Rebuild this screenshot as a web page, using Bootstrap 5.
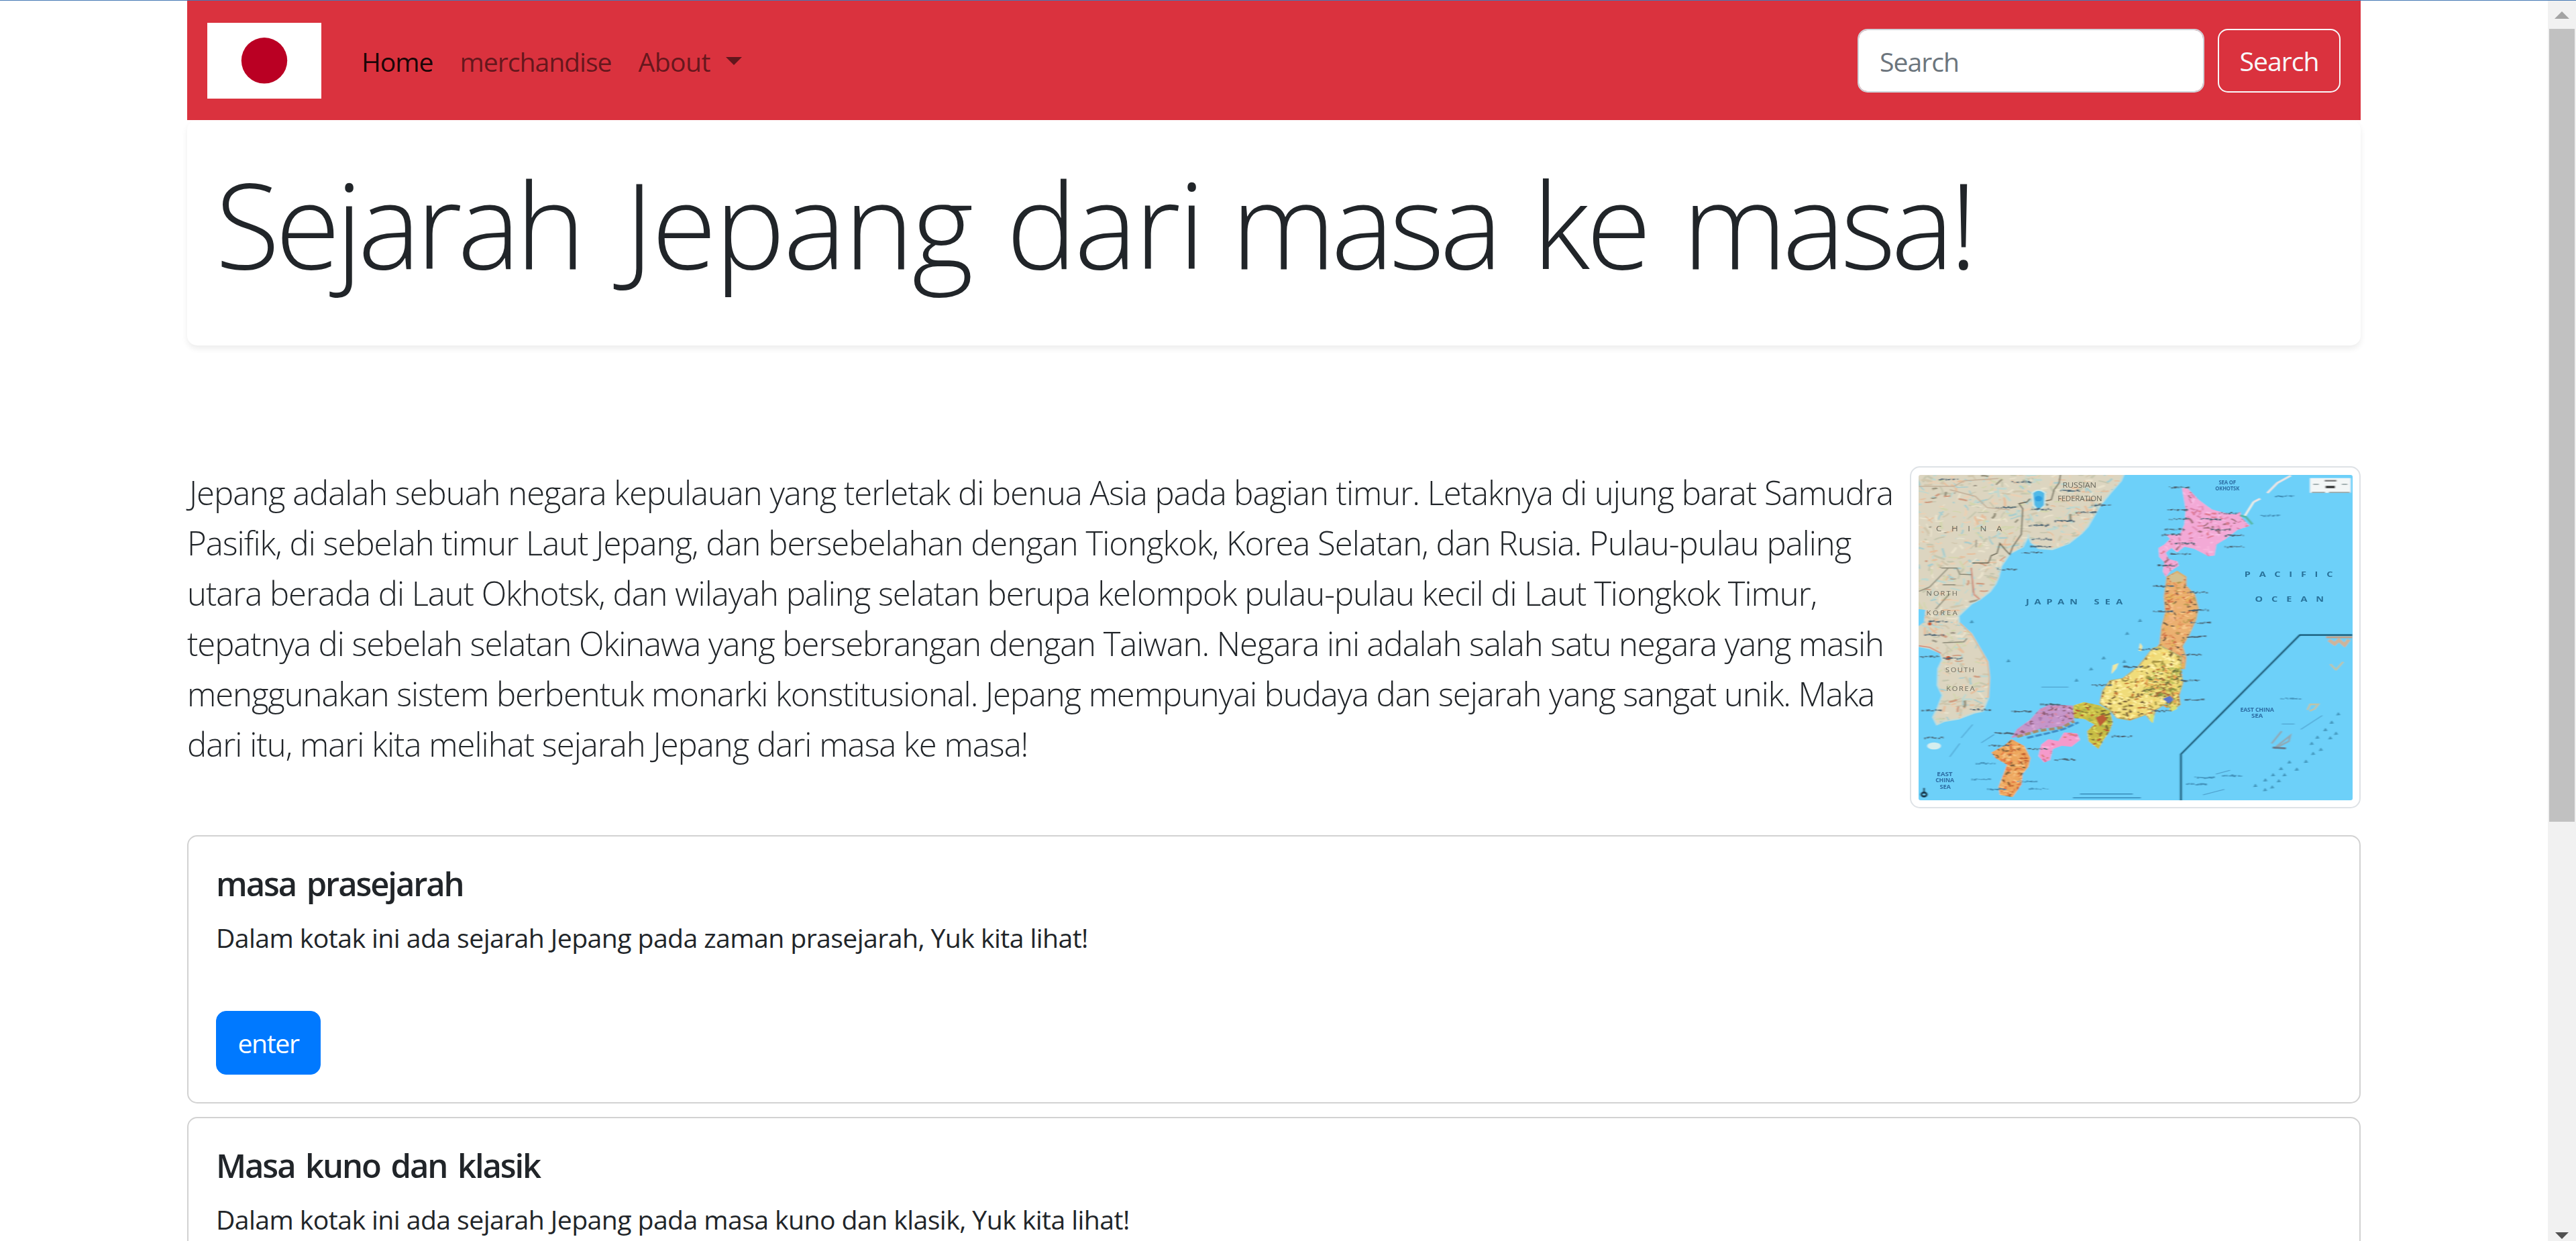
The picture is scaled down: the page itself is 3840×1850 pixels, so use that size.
<!DOCTYPE html>
<html lang="id">
<head>
<meta charset="utf-8">
<meta name="viewport" content="width=device-width, initial-scale=1">
<title>Sejarah Jepang</title>
<link href="https://cdn.jsdelivr.net/npm/bootstrap@5.3.0/dist/css/bootstrap.min.css" rel="stylesheet">
<style>
  html { font-size: 40px; overflow: hidden; }
  body { font-family: "Open Sans", "Noto Sans", sans-serif; height: 1850px; overflow: hidden; border-top: 1px solid #4679b4; color: #212529; background: #fff; letter-spacing: -.58px; font-size: 39.2px; line-height: 60px; }
  .page-shell { height: 1849px; }
  .page-main { width: 3798px; overflow: hidden; }
  .site-width { width: 3240px; max-width: 3240px; }
  .site-nav { background: #da323e; height: 178px; }
  .site-nav .container-fluid { padding: 0 30px; }
  .flag-logo { width: 170px; height: 113px; }
  .site-nav .nav-link { font-size: 39.2px; letter-spacing: -1.05px; color: rgba(0,0,0,.55); padding-top: 22px; padding-bottom: 18px; }
  .site-nav .nav-link.active { color: rgba(0,0,0,.9); }
  .site-nav .dropdown-toggle { letter-spacing: -.6px; }
  .site-nav .dropdown-toggle::after { border-top-width: 12px; border-left-width: 12px; border-right-width: 12px; margin-left: 23px; vertical-align: 10px; }
  .site-search .form-control { width: 517px; height: 95px; border: 2px solid #ced4da; font-size: 39.2px; letter-spacing: -1px; padding: 17px 31px 15px; color: #6c757d; }
  .site-search .form-control::placeholder { color: #6c757d; opacity: 1; }
  .site-search .btn { width: 183px; height: 95px; border: 2px solid #f8f9fa; font-size: 39.2px; letter-spacing: -1px; padding: 16px 0 14px; line-height: 60px; white-space: nowrap; }
  .hero-box { height: 336px; border-radius: 15px; box-shadow: 0 5px 10px rgba(0,0,0,.075); margin-bottom: 180px; }
  .hero-box h1 { font-size: 176.4px; line-height: 216px; font-weight: 300; letter-spacing: -5.2px; word-spacing: 11px; white-space: nowrap; margin-left: 2px; padding-top: 6px; }
  .hero-box .w-tight { letter-spacing: -6.8px; }
  .hero-box .w-jepang { letter-spacing: -2.8px; margin-left: 13px; }
  .hero-box .w-dari { letter-spacing: -3.6px; margin-right: -9px; }
  .intro-text { font-size: 49px; line-height: 75px; font-weight: 300; letter-spacing: -1.02px; padding-top: 2px; }
  .intro-text span { display: block; white-space: nowrap; }
  .intro-text span:nth-child(1) { text-indent: 3px; letter-spacing: -1.01px; }
  .intro-text span:nth-child(2), .intro-text span:nth-child(6) { letter-spacing: -.97px; }
  .intro-text span:nth-child(4) { letter-spacing: -1.04px; }
  .intro-text span:nth-child(5) { letter-spacing: -1.07px; }
  .map-thumb { width: 672px; height: 510px; padding: 10.5px; border: 2px solid #dee2e6; border-radius: 15px; }
  .map-thumb svg { border-radius: 3px; }
  .era-card { height: 400px; border: 2px solid #d2d2d2; border-radius: 15px; margin-bottom: 20px; }
  .era-card .card-body { padding: 40px 41px; }
  .era-card .card-title { font-size: 49px; line-height: 60px; font-weight: 600; letter-spacing: -2.1px; word-spacing: 5px; margin-bottom: 20px; }
  .era-card .card-text { margin-bottom: 80px; padding-top: 1px; height: 60px; }
  .era-card .btn { background: #0079ff; border-color: #0079ff; width: 156px; height: 95px; border-radius: 15px; font-size: 39.2px; line-height: 60px; padding: 17px 0; letter-spacing: -1.4px; }
  .scroll-rail { width: 42px; background: #f1f1f1; }
  .scroll-rail .thumb { width: 38px; height: 1182px; background: #c1c1c1; }
  .scroll-end { height: 42px; }
</style>
<script src="https://cdn.jsdelivr.net/npm/bootstrap@5.3.0/dist/js/bootstrap.bundle.min.js"></script>
</head>
<body>
<div class="page-shell d-flex">
  <main class="page-main">
    <div class="site-width mx-auto">
      <nav class="site-nav navbar navbar-expand-lg p-0">
        <div class="container-fluid">
          <a class="navbar-brand p-0" href="#">
            <svg class="flag-logo d-block" viewBox="0 0 170 113"><rect width="170" height="113" fill="#fff"/><circle cx="85" cy="56.3" r="34.2" fill="#ba0023"/></svg>
          </a>
          <ul class="navbar-nav me-auto">
            <li class="nav-item"><a class="nav-link active" href="#">Home</a></li>
            <li class="nav-item"><a class="nav-link" href="#">merchandise</a></li>
            <li class="nav-item dropdown"><a class="nav-link dropdown-toggle" href="#">About</a></li>
          </ul>
          <form class="site-search d-flex">
            <input class="form-control me-2" type="search" placeholder="Search">
            <button class="btn btn-outline-light" type="button">Search</button>
          </form>
        </div>
      </nav>

      <header class="hero-box p-3"><h1><span class="w-tight">Sejarah</span> <span class="w-jepang">Jepang</span> <span class="w-dari">dari</span> <span class="w-tight">masa</span> ke <span class="w-tight">masa!</span></h1></header>

      <section class="d-flex justify-content-between mb-3">
        <p class="intro-text mb-0"><span>Jepang adalah sebuah negara kepulauan yang terletak di benua Asia pada bagian timur. Letaknya di ujung barat Samudra</span><span>Pasifik, di sebelah timur Laut Jepang, dan bersebelahan dengan Tiongkok, Korea Selatan, dan Rusia. Pulau-pulau paling</span><span>utara berada di Laut Okhotsk, dan wilayah paling selatan berupa kelompok pulau-pulau kecil di Laut Tiongkok Timur,</span><span>tepatnya di sebelah selatan Okinawa yang bersebrangan dengan Taiwan. Negara ini adalah salah satu negara yang masih</span><span>menggunakan sistem berbentuk monarki konstitusional. Jepang mempunyai budaya dan sejarah yang sangat unik. Maka</span><span>dari itu, mari kita melihat sejarah Jepang dari masa ke masa!</span></p>
        <div class="map-thumb flex-shrink-0">
          <svg id="map" class="d-block w-100 h-100" viewBox="21 24 1517 1455" preserveAspectRatio="none" font-family="Open Sans, sans-serif">
            <defs>
              <filter id="soft" x="0" y="0" width="100%" height="100%"><feGaussianBlur stdDeviation="2.2"/></filter>
              <clipPath id="c-main"><path id="p-main" d="M0 0H745L728 50 690 105 655 160 612 255 590 285 545 330 488 357 440 352 415 325 405 295 385 345 340 375 310 430 300 480 290 510 270 545 235 580 205 600 160 655 162 685 205 735 235 800 262 860 268 930 264 1020 245 1080 215 1088 190 1100 160 1115 110 1125 85 1140 72 1108 90 1060 105 1010 88 965 90 890 105 850 98 820 60 800 0 785V620H0z"/></clipPath>
              <clipPath id="c-hok"><path id="p-hok" d="M942 82 962 85 1000 135 1045 178 1095 195 1130 200 1145 190 1150 215 1178 252 1135 270 1095 310 1062 335 1055 385 1035 388 985 355 950 345 925 370 905 350 885 372 895 400 925 410 930 430 900 455 885 480 875 455 880 415 862 390 860 350 880 335 900 310 885 290 935 290 950 245 955 180z"/></clipPath>
              <clipPath id="c-toh"><path id="p-toh" d="M890 480 925 455 955 480 955 520 985 560 998 620 990 670 965 740 942 790 955 840 950 890 850 880 835 830 865 780 872 700 885 640 880 570z"/></clipPath>
              <clipPath id="c-chu"><path id="p-chu" d="M840 800 870 790 940 840 935 900 945 950 930 1010 935 1050 905 1078 890 1040 850 1075 835 1125 815 1095 760 1120 715 1110 690 1075 655 1045 665 990 690 945 735 935 790 880z"/></clipPath>
              <clipPath id="c-kan"><path id="p-kan" d="M860 870 940 870 945 950 930 1010 935 1050 895 1075 850 1030 805 990 820 930z"/></clipPath>
              <clipPath id="c-kin"><path id="p-kin" d="M562 1055 600 1040 655 1055 690 1080 700 1130 690 1170 670 1205 650 1250 615 1215 610 1170 635 1140 600 1115 560 1110z"/></clipPath>
              <clipPath id="c-cgk"><path id="p-cgk" d="M345 1200 365 1160 410 1120 445 1070 480 1050 560 1055 565 1120 520 1150 440 1160 390 1190z"/></clipPath>
              <clipPath id="c-shi"><path id="p-shi" d="M450 1230 475 1205 510 1215 530 1175 575 1180 585 1210 555 1240 520 1235 490 1250 480 1300 460 1310 440 1280z"/></clipPath>
              <clipPath id="c-kyu"><path id="p-kyu" d="M275 1265 320 1235 345 1205 390 1235 412 1290 405 1330 385 1360 380 1410 350 1465 305 1455 300 1420 315 1370 330 1320 290 1290z"/></clipPath>
            </defs>
            <g filter="url(#soft)">
              <rect width="1560" height="1500" fill="#6dd0f9"/>
              <use href="#p-main" fill="#dcd5c0" stroke="#c3dcd8" stroke-width="7"/>
              <g id="s-main" clip-path="url(#c-main)"></g>
              <path d="M418 105Q440 80 464 105L462 160 440 185 423 160z" fill="#4fb9e8" stroke="#cfe9e6" stroke-width="6"/>
              <path d="M0 620 45 628 40 680 22 700H0z" fill="#6dd0f9"/>
              <use href="#p-hok" fill="#f3a9d6"/><g id="s-hok" clip-path="url(#c-hok)"></g>
              <use href="#p-toh" fill="#ebb070" stroke="#c9b07c" stroke-width="6"/><g id="s-toh" clip-path="url(#c-toh)"></g>
              <use href="#p-chu" fill="#f0dc7a" stroke="#b9b67a" stroke-width="6"/><g id="s-chu" clip-path="url(#c-chu)"></g>
              <g id="s-kan" clip-path="url(#c-kan)"></g>
              <use href="#p-kin" fill="#c8bd45"/><g id="s-kin" clip-path="url(#c-kin)"></g>
              <use href="#p-cgk" fill="#c595c9"/><g id="s-cgk" clip-path="url(#c-cgk)"></g>
              <path d="M365 1195 440 1168 520 1155 565 1125" stroke="#a58d6a" stroke-width="12" fill="none" stroke-dasharray="22 7"/>
              <path d="M400 1200 470 1180 530 1160 580 1130" stroke="#3f8ec6" stroke-width="9" fill="none" stroke-dasharray="24 6"/>
              <use href="#p-shi" fill="#f59acb"/><g id="s-shi" clip-path="url(#c-shi)"></g>
              <use href="#p-kyu" fill="#eda65c"/><g id="s-kyu" clip-path="url(#c-kyu)"></g>
              <path d="M875 1025 900 1012 912 1030 895 1046z" fill="#5b76c8"/><path d="M640 1110 665 1095 680 1115 655 1150z" fill="#bd5e35"/>
              <path d="M895 1075 920 1052 925 1070 905 1082zM830 1090 845 1100 840 1135 828 1120z" fill="#d9e070"/>
              <path d="M695 915 700 875 720 865 712 890zM790 810 795 775 803 790 800 812z" fill="#efe8a0"/>
              <path d="M895 478 925 462 950 482 945 500 905 505z" fill="#d3c090"/>
              <path d="M1160 210 1192 145" stroke="#f2f0e4" stroke-width="7"/><path d="M1192 145 1215 130M1240 105 1275 60 1322 27" stroke="#efe6e2" stroke-width="8" fill="none"/>
              <path d="M1145 205 1165 212 1188 245" stroke="#59b9a8" stroke-width="9" fill="none"/>
              <ellipse cx="75" cy="1236" rx="24" ry="16" fill="#d5eeee"/>
              <ellipse cx="440" cy="130" rx="13" ry="12" fill="#2d9fe0"/>
              <g fill="none" stroke="#6b6857" stroke-width="4.5">
                <path d="M517 24 512 60 495 90 485 135 465 140M410 130 400 145 372 152 385 175 380 290 350 345 340 380 325 360 305 330 295 375 275 385 265 418 208 418"/>
                <path d="M22 545 60 525 125 440 155 440 165 468 208 470M205 440 212 550M105 775 180 770 190 755M155 440 100 440M105 515 150 515M80 625 130 555" stroke="#8b8977"/>
                <path d="M21 75 145 75 180 50 300 40M130 90 220 120 260 170 340 180" stroke="#c4b19a"/>
              </g>
              <path d="M21 788 60 795 100 822M205 440 215 560 235 580" stroke="#d88f7d" stroke-width="5" fill="none"/>
              <path d="M165 685 205 735 235 800 262 860 268 930 264 1020" stroke="#e6b482" stroke-width="4" fill="none"/>
              <g fill="#cf5a30"><circle cx="125" cy="843" r="9"/><circle cx="60" cy="690" r="7"/></g>
              <g stroke="#4a99c5" stroke-width="3"><path d="M210 1140 170 1200M165 1225 130 1285M285 1185 240 1222M450 973H545M1432 1100 1357 1162M1290 1138H1335M1015 1455 1090 1430M1060 1362 1110 1345"/></g>
              <g stroke="#2f7fae" stroke-width="4"><path d="M585 1451H770M560 1468H798"/></g>
              <path d="M1538 740H1353L938 1273V1480" fill="none" stroke="#155674" stroke-width="7"/>
              <path d="M1255 1225 1290 1170M1270 1240 1320 1190 1315 1215 1265 1248" fill="none" stroke="#8fa9b5" stroke-width="7"/><path d="M1258 1243 1305 1247" stroke="#65798a" stroke-width="8"/>
              <path d="M1380 1075 1390 1050 1418 1050 1405 1070 1388 1080M1460 870 1480 895 1505 860" fill="none" stroke="#bfc3a6" stroke-width="7"/>
              <path d="M1455 762 1475 780 1490 762 1510 785 1525 760" fill="none" stroke="#cfb39a" stroke-width="14"/>
              <path d="M1445 750H1538" stroke="#c0a18c" stroke-width="9"/>
              <g id="s-sea"></g>
              <rect x="1389" y="38" width="142" height="66" fill="#f3f6f6"/><path d="M1443 78H1477" stroke="#333" stroke-width="10"/><path d="M1400 66H1420M1500 66H1520M1395 102H1442M1455 102H1528" stroke="#8a9a9c" stroke-width="4"/><path d="M1440 50H1482" stroke="#777" stroke-width="7"/>
              <circle cx="40" cy="1453" r="9" fill="none" stroke="#17364a" stroke-width="8"/><path d="M40 1424V1445" stroke="#17364a" stroke-width="6"/>
            </g>
            <g font-weight="700" opacity=".85">
              <g fill="#57564c" font-size="31" font-weight="400">
                <text x="524" y="80" textLength="118" lengthAdjust="spacingAndGlyphs">RUSSIAN</text><text x="507" y="142" textLength="155" lengthAdjust="spacingAndGlyphs">FEDERATION</text>
                <text x="82" y="276" textLength="230">CHINA</text>
                <text x="48" y="565" textLength="108" font-size="26">NORTH</text><text x="48" y="652" textLength="108" font-size="26">KOREA</text>
                <text x="115" y="905" textLength="100" font-size="26">SOUTH</text><text x="118" y="990" textLength="98" font-size="26">KOREA</text>
              </g>
              <g fill="#1c6189" font-size="34">
                <text x="396" y="603" textLength="180">JAPAN</text><text x="634" y="603" textLength="100">SEA</text>
                <text x="1160" y="481" textLength="308">PACIFIC</text><text x="1197" y="591" textLength="240">OCEAN</text>
              </g>
              <g fill="#225d96" font-size="28">
                <text x="1070" y="65" textLength="60" lengthAdjust="spacingAndGlyphs">SEA OF</text><text x="1058" y="93" textLength="84" lengthAdjust="spacingAndGlyphs">OKHOTSK</text>
                <text x="1145" y="1083" textLength="118" lengthAdjust="spacingAndGlyphs">EAST CHINA</text><text x="1184" y="1111" textLength="40" lengthAdjust="spacingAndGlyphs">SEA</text>
                <text x="85" y="1371" textLength="54" lengthAdjust="spacingAndGlyphs">EAST</text><text x="80" y="1399" textLength="65" lengthAdjust="spacingAndGlyphs">CHINA</text><text x="95" y="1428" textLength="38" lengthAdjust="spacingAndGlyphs">SEA</text>
              </g>
            </g>
          </svg>
        </div>
      </section>

      <article class="card era-card"><div class="card-body">
        <h5 class="card-title">masa prasejarah</h5>
        <p class="card-text">Dalam kotak ini ada sejarah Jepang pada zaman prasejarah, Yuk kita lihat!</p>
        <a href="#" class="btn btn-primary">enter</a>
      </div></article>
      <article class="card era-card"><div class="card-body">
        <h5 class="card-title">Masa kuno dan klasik</h5>
        <p class="card-text">Dalam kotak ini ada sejarah Jepang pada masa kuno dan klasik, Yuk kita lihat!</p>
      </div></article>
    </div>
  </main>
  <aside class="scroll-rail d-flex flex-column align-items-center">
    <div class="scroll-end d-flex"><svg width="22" height="42"><path d="M0 27 11 16 22 27z" fill="#a3a3a3"/></svg></div>
    <div class="thumb"></div>
    <div class="scroll-end mt-auto"><svg class="d-block" width="22" height="42"><path d="M1 29H21L11 39z" fill="#505050"/></svg></div>
  </aside>
</div>
<script>
  // Terrain, road and place-name texture of the map, drawn with a fixed seed.
  let seed = 7;
  const rnd = () => (seed = (seed * 16807) % 2147483647) / 2147483647;
  function texture(id, x, y, w, h, count, size, colors) {
    let out = '';
    for (let i = 0; i < count; i++) {
      const px = x + rnd() * w, py = y + rnd() * h;
      const turn = rnd() * 6.28, len = size * (.4 + rnd() * .6);
      const dx = Math.cos(turn) * len, dy = Math.sin(turn) * len * (rnd() < .4 ? .1 : 1);
      const bx = dx / 2 + (rnd() - .5) * 14, by = dy / 2 + (rnd() - .5) * 14;
      out += `<path d="M${px.toFixed(0)} ${py.toFixed(0)}q${bx.toFixed(0)} ${by.toFixed(0)} ${dx.toFixed(0)} ${dy.toFixed(0)}" stroke="${colors[Math.floor(rnd() * colors.length)]}" stroke-width="${(4 + rnd() * 5).toFixed(1)}" fill="none"/>`;
    }
    document.getElementById(id).innerHTML += out;
  }
  texture('s-main', 21, 24, 720, 1110, 1500, 42, ['#c6c6ae', '#ead0b4', '#bfd8cf', '#e9e2cc', '#d0c6ac', '#a9cdcd', '#e6bf9d', '#d3d6ae']);
  texture('s-main', 21, 24, 720, 1110, 90, 34, ['#96917c', '#a19a88', '#cf9c80']);
  texture('s-hok', 850, 80, 330, 400, 380, 26, ['#e58fb9', '#f7bce4', '#f5b0dc', '#d97fa6', '#e07c93', '#f8b4dc', '#a9707f']);
  texture('s-toh', 830, 450, 170, 440, 520, 22, ['#d06f45', '#f7c88a', '#b89a4f', '#e3955c', '#745b42', '#f3b682', '#e9b45e']);
  texture('s-chu', 650, 790, 300, 340, 700, 20, ['#fff0a0', '#c87c38', '#a99745', '#f3d068', '#80683e', '#fff3ac', '#f5e48c']);
  texture('s-kan', 800, 870, 150, 200, 260, 20, ['#8c973f', '#dfd66a', '#a9713b', '#eda756', '#b8c05c', '#cfc65a', '#6f7440']);
  texture('s-kin', 560, 1040, 145, 210, 200, 20, ['#7d6d30', '#e0dc61', '#b7592e', '#a7b24a', '#cfcb50']);
  texture('s-cgk', 345, 1050, 220, 150, 160, 20, ['#a979ad', '#dbabd8', '#8d5b72', '#d68aa9', '#c99acb']);
  texture('s-shi', 440, 1170, 150, 140, 70, 20, ['#e0709c', '#f9b3dc', '#dd7d7b', '#f59acb']);
  texture('s-kyu', 275, 1200, 140, 265, 260, 20, ['#c4602f', '#f6c383', '#86603a', '#e77a45', '#f0ae6a']);
  // Coastal place names
  [[930,80],[925,180],[930,222],[915,268],[905,292],[935,378],[890,430],[875,522],[995,550],[1000,628],[875,635],[1005,686],[992,748],[975,828],[825,805],[770,883],[660,965],[970,944],[985,1030],[730,1194],[480,1050],[380,1082],[320,1180],[300,1235],[435,1250],[255,1315],[400,1395],[440,1428],[295,1430],[530,1298],[240,1385],[870,1080],[1105,195],[1125,295],[1125,346],[1040,222],[1075,270],[950,330],[1250,207],[1300,120],[450,178],[440,250],[530,230],[450,312],[445,345],[415,372],[330,447],[325,170],[380,57],[125,45],[550,95],[660,160],[605,192],[90,680],[75,740],[60,838],[140,845],[65,1077],[235,1075],[75,1200],[1320,1025],[1020,1378],[1115,1370],[990,1408]].forEach(([x, y]) => {
    let out = '';
    for (let i = 0; i < 9; i++) out += `<path d="M${x - 34 + i * 8} ${(y + rnd() * 5 - 3).toFixed(0)}h${(3 + rnd() * 6).toFixed(0)}" stroke="${y > 1300 || x > 1180 ? '#3f8db6' : '#4b6574'}" stroke-width="${(4 + rnd() * 5).toFixed(1)}"/>`;
    document.getElementById('s-sea').innerHTML += out;
  });
  // Scattered small islands of the inset and of the open sea
  [[1488,1093],[1465,1130],[1443,1163],[1415,1197],[1460,1200],[1480,1180],[1395,1225],[1427,1252],[1400,1270],[1375,1305],[1317,1308],[1343,1340],[1288,1337],[1260,1365],[1233,1388],[1300,1365],[1280,1392],[1257,1420],[1232,1432],[1198,1413],[795,675],[750,733],[668,842],[573,942],[624,892],[335,855],[207,680],[740,858]].forEach(([x, y]) => {
    document.getElementById('s-sea').innerHTML += `<path d="M${x - 5} ${y + 5}l5 -10 5 9z" fill="#5bb1d5" stroke="#3d8fb5" stroke-width="3"/>`;
  });
</script>
</body>
</html>
